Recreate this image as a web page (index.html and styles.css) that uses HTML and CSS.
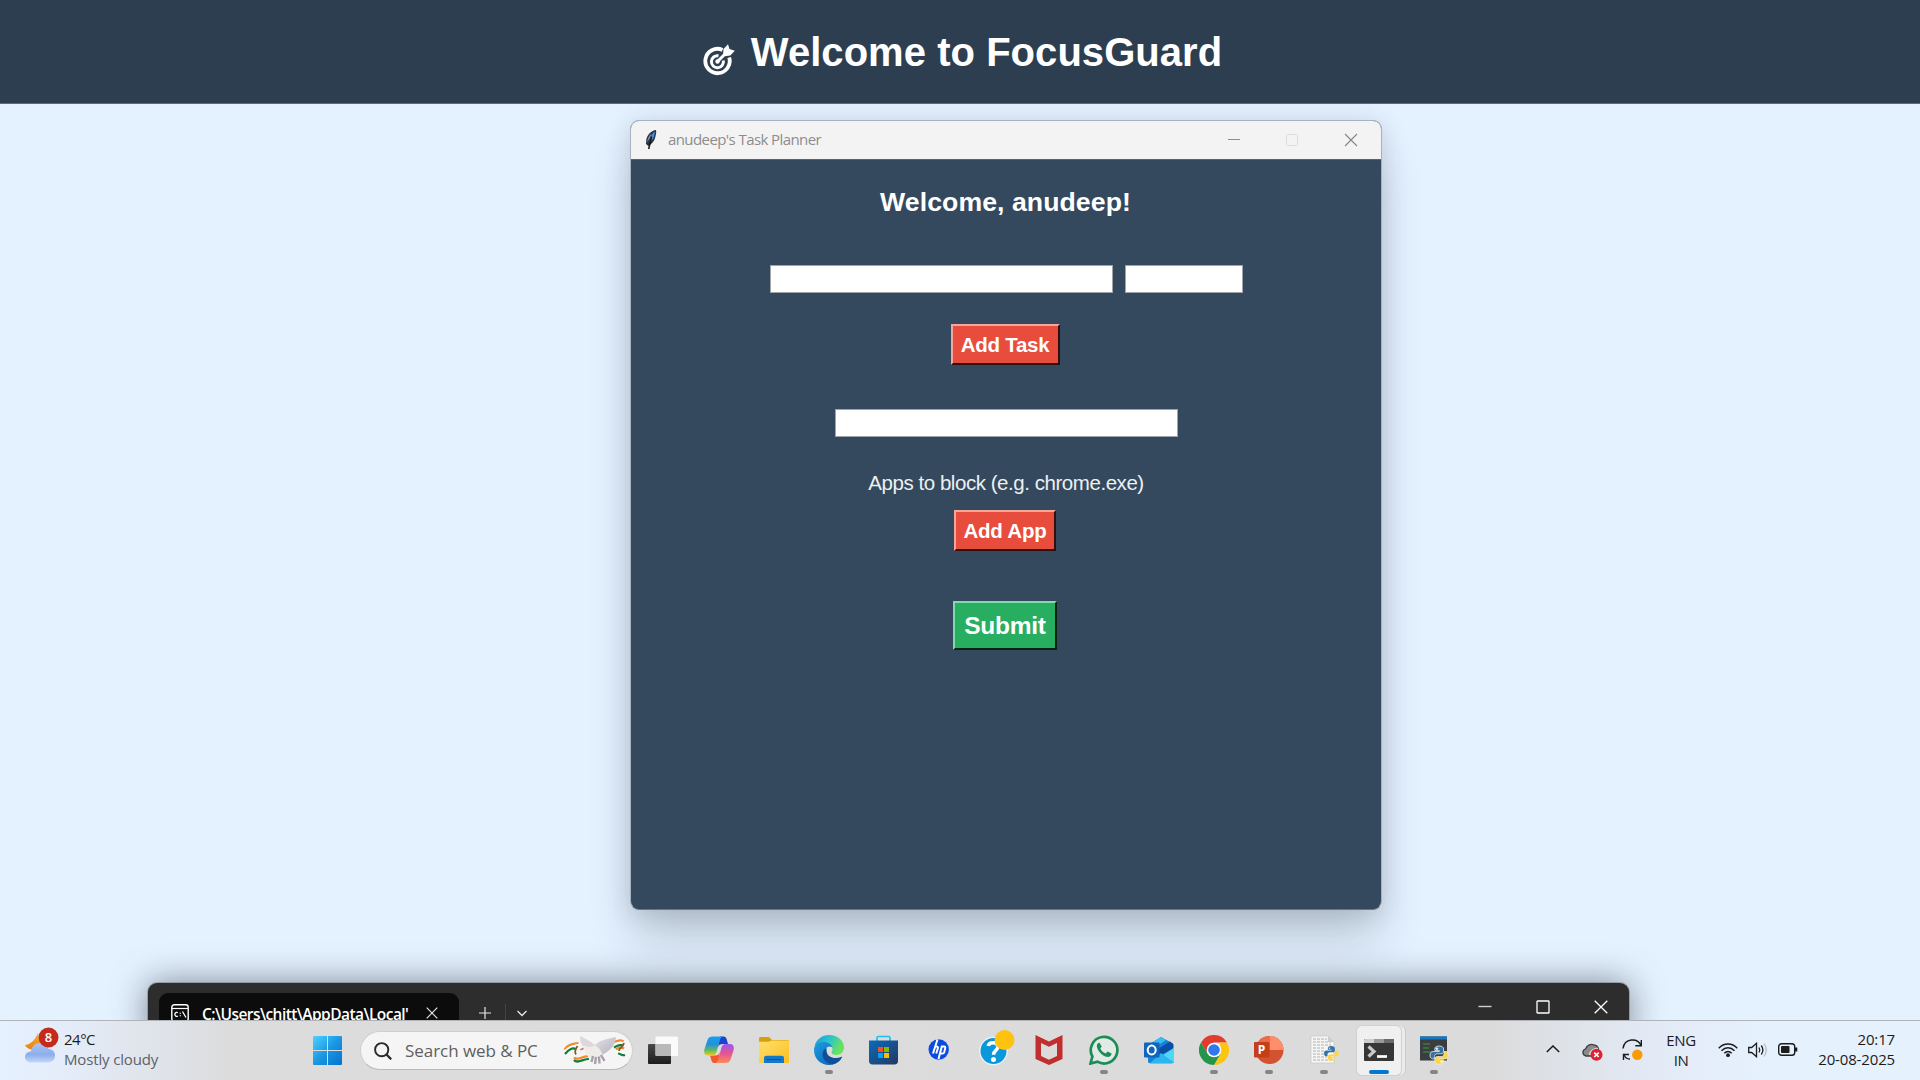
FILE: index.html
```html
<!DOCTYPE html>
<html lang="en">
<head>
<meta charset="utf-8">
<title>FocusGuard</title>
<link rel="stylesheet" href="styles.css">
</head>
<body>
<header class="banner">
  <svg class="banner-icon" viewBox="0 0 32 32" width="32" height="32" fill="none" stroke="#fff">
    <path d="M19.500 5.900A12.200 12.200 0 1 0 26.200 13.500" stroke-width="3.800"/>
    <path d="M15.500 11.800A6 6 0 1 0 20.300 16.500" stroke-width="3"/>
    <path d="M14.500 17.500L24 8" stroke-width="3"/>
    <path d="M20 11.500l.5-6.500L25 .3l1.500 4.700 5.300 1.700-4.500 4.800-5.500.8z" fill="#fff" stroke="none"/>
    <circle cx="14.500" cy="17.500" r="2.200" fill="#fff" stroke="none"/>
  </svg>
  <h1 class="banner-title">Welcome to FocusGuard</h1>
</header>

<main class="desktop">
  <section class="planner">
    <div class="planner-bar">
      <svg class="feather" viewBox="0 0 14 22" width="14" height="22">
        <path d="M12 1C7.500 1.500 3.300 5.500 2.300 10.500L2 15l2.300 2C8 15 10.500 12 11.200 8.500c.4-2.500 1.500-4.500.8-7.500z" fill="#2b3440"/>
        <path d="M11.200 2.500C8 4 6.300 7.500 5.500 13c3-2 4.300-4 4.700-6.500z" fill="#4a8be0"/>
        <path d="M7.500 4.500C5 7 3.700 9 3.300 13L6 9z" fill="#6d9bd0"/>
        <path d="M7.500 7.500L4.700 20" stroke="#151515" stroke-width="1.500"/>
      </svg>
      <span class="planner-title">anudeep's Task Planner</span>
      <div class="planner-controls">
        <svg viewBox="0 0 14 14" width="14" height="14"><path d="M1 6.500h12" stroke="#8c8c8c"/></svg>
        <svg viewBox="0 0 14 14" width="14" height="14"><rect x="1.500" y="1.500" width="11" height="11" rx="1" fill="none" stroke="#dcdcdc"/></svg>
        <svg viewBox="0 0 14 14" width="14" height="14"><path d="M1 1l12 12M13 1L1 13" stroke="#858585" stroke-width="1.100"/></svg>
      </div>
    </div>
    <div class="planner-body">
      <h2 class="greeting">Welcome, anudeep!</h2>
      <div class="entry-row">
        <div class="entry entry-wide"></div>
        <div class="entry entry-short"></div>
      </div>
      <button class="tk-button add-task">Add Task</button>
      <div class="entry entry-wide entry-app"></div>
      <p class="hint">Apps to block (e.g. chrome.exe)</p>
      <button class="tk-button add-app">Add App</button>
      <button class="tk-button submit">Submit</button>
    </div>
  </section>

  <section class="terminal">
    <div class="tab">
      <svg viewBox="0 0 18 18" width="18" height="18" fill="none" stroke="#fff">
        <rect x=".8" y=".8" width="16.400" height="16.400" rx="2.500" stroke-width="1.400"/>
        <path d="M1 4.500h16" stroke-width="1.200"/>
        <path d="M6.800 8.600a2 2 0 1 0 0 3.500M9.300 8.800v1M9.300 11.300v1M11.500 7.500l3.500 6" stroke-width="1.300"/>
      </svg>
      <span class="tab-title">C:\Users\chitt\AppData\Local'</span>
      <svg class="tab-close" viewBox="0 0 12 12" width="12" height="12"><path d="M.7.700l10.600 10.600M11.300.7L.7 11.300" stroke="#e4e4e4" stroke-width="1.200"/></svg>
    </div>
    <div class="tab-tools">
      <svg viewBox="0 0 12 12" width="12" height="12"><path d="M6 0v12M0 6h12" stroke="#e8e8e8" stroke-width="1.200"/></svg>
      <span class="tab-divider"></span>
      <svg viewBox="0 0 12 12" width="12" height="12"><path d="M1.500 4l4.500 4.500L10.500 4" fill="none" stroke="#e8e8e8" stroke-width="1.300"/></svg>
    </div>
    <div class="terminal-controls">
      <svg viewBox="0 0 14 14" width="14" height="14"><path d="M.5 6.500h13" stroke="#d0d0d0" stroke-width="1.400"/></svg>
      <svg viewBox="0 0 14 14" width="14" height="14"><rect x="1" y="1" width="12" height="12" rx=".6" fill="none" stroke="#fff" stroke-width="1.300"/></svg>
      <svg viewBox="0 0 14 14" width="14" height="14"><path d="M.7.700l12.600 12.600M13.300.7L.7 13.300" stroke="#fff" stroke-width="1.300"/></svg>
    </div>
  </section>
</main>

<footer class="taskbar">
  <svg width="0" height="0" class="defs">
    <defs>
      <linearGradient id="cloud" x2="0" y2="1"><stop stop-color="#a9c4f3"/><stop offset=".6" stop-color="#8eadea"/><stop offset="1" stop-color="#c4d8fa"/></linearGradient>
      <linearGradient id="moon" x2="0" y2="1"><stop stop-color="#f7b52b"/><stop offset="1" stop-color="#ee7d11"/></linearGradient>
      <linearGradient id="win" gradientUnits="userSpaceOnUse" x1="0" y1="0" x2="29" y2="29"><stop stop-color="#4fd2ff"/><stop offset=".5" stop-color="#1a97e2"/><stop offset="1" stop-color="#0671ce"/></linearGradient>
      <linearGradient id="dark" x2="0" y2="1"><stop stop-color="#4a4a48"/><stop offset="1" stop-color="#1d1d1d"/></linearGradient>
      <linearGradient id="copL" x2="0" y2="1"><stop stop-color="#16a0f0"/><stop offset=".4" stop-color="#2390dc"/><stop offset=".7" stop-color="#58b86c"/><stop offset="1" stop-color="#f2cb15"/></linearGradient>
      <linearGradient id="copR" x2="0" y2="1"><stop stop-color="#9b56f0"/><stop offset=".5" stop-color="#e65591"/><stop offset="1" stop-color="#fc8a55"/></linearGradient>
      <linearGradient id="folder" x2="1" y2="1"><stop stop-color="#ffdf6d"/><stop offset="1" stop-color="#fdbf20"/></linearGradient>
      <linearGradient id="edgeTop" x2="1" y2=".4"><stop stop-color="#1b97dd"/><stop offset=".5" stop-color="#2cc2cf"/><stop offset="1" stop-color="#6ae35a"/></linearGradient>
      <linearGradient id="edgeLow" x2="1" y2="1"><stop stop-color="#1b9de2"/><stop offset="1" stop-color="#0d5cb0"/></linearGradient>
      <linearGradient id="store" x2="1" y2="1"><stop stop-color="#0b6bbb"/><stop offset="1" stop-color="#24365f"/></linearGradient>
      <linearGradient id="wing" x2="1" y2="1"><stop stop-color="#e6e2e6"/><stop offset="1" stop-color="#b3b0bf"/></linearGradient>
      <g id="python">
        <path d="M7.800 0C5 0 4.200 1.200 4.200 2.600V4h4v.8H2.600C1 4.800 0 6 0 8s1 3.200 2.300 3.200h1.500V9.300c0-1.500 1.100-2.500 2.500-2.500h3.500c1.200 0 2-.9 2-2V2.600C11.800 1 10.500 0 7.800 0z" fill="#3573a6"/>
        <path d="M8.200 16c2.800 0 3.600-1.200 3.600-2.600V12h-4v-.8h5.600C15 11.200 16 10 16 8s-1-3.200-2.300-3.200h-1.500v1.900c0 1.500-1.100 2.500-2.500 2.500H6.200c-1.200 0-2 .9-2 2v2.200C4.200 15 5.500 16 8.200 16z" fill="#ffd545"/>
        <circle cx="6" cy="2.300" r=".8" fill="#fff"/><circle cx="10" cy="13.700" r=".8" fill="#fff"/>
      </g>
    </defs>
  </svg>

  <div class="weather">
    <svg viewBox="0 0 36 38" width="36" height="38">
      <path d="M14 6c-3 6-6 11-13 12 2 4 6 5 10 4.500l7-5-3-5z" fill="url(#moon)"/>
      <path d="M8 35.500c-4 0-7-2-7-5.500 0-3.300 2.700-5.500 6-5.500.6-5.500 4-8.500 9-8.500 4.500 0 7.500 2.300 8.500 6 3.700 0 6.500 2.500 6.500 6.500s-2.800 7-7 7z" fill="url(#cloud)"/>
      <circle cx="24.500" cy="10.500" r="10" fill="#c42b1c"/>
      <text x="24.500" y="15.200" class="badge-number">8</text>
    </svg>
    <div class="weather-text">
      <span class="temperature">24°C</span>
      <span class="condition">Mostly cloudy</span>
    </div>
  </div>

  <svg class="start" viewBox="0 0 29 29" width="29" height="29" fill="url(#win)">
    <path d="M1 0h13v14H0V1a1 1 0 0 1 1-1zM15 0h13a1 1 0 0 1 1 1v13H15zM0 15h14v14H1a1 1 0 0 1-1-1zM15 15h14v13a1 1 0 0 1-1 1H15z"/>
  </svg>

  <div class="search">
    <svg viewBox="0 0 18 18" width="18" height="18" fill="none" stroke="#2a2a2a"><circle cx="7.700" cy="7.700" r="6.600" stroke-width="1.900"/><path d="M12.500 12.500l4.700 4.800" stroke-width="2.300"/></svg>
    <span class="search-text">Search web &amp; PC</span>
    <svg class="dove" viewBox="0 0 63 32" width="63" height="32" fill="none">
      <path d="M.5 14.500C4 9 9 9 14.500 8M48 8c4-2.500 10-3.500 11.500-1.500M52 14.500c2-2 6-2.500 8-1M10 22.500c3 4 9-2 14-1" stroke="#f28a2a" stroke-width="2.200"/>
      <path d="M.5 17C4 11.500 9 11.500 15 9.500c-3 3.500-6 6-5 10M49 10.500c4-2.500 8-3.500 10-2.500M53 16.500c2 0 5 1 7 2.500" stroke="#fdfdfd" stroke-width="1.800"/>
      <path d="M1 19c4-5 8-7 11-4.500M10 25c3 4 9-1 15-1M50 12.500c4-2.500 8-3 9-2M54 18.500c2.500 0 4.500 2.500 7 1.500" stroke="#12803a" stroke-width="2.200"/>
      <path d="M13.500 11c-2 3-3.500 6-1.500 8.500M60 8c-1 4-5 5-5 8" stroke="#7b5b2c" stroke-width="1.800"/>
      <path d="M16.500.5C15.800 6 17 9.500 20 11.500c4 1.500 8 1.500 12 0C28 6 21 4.500 16.500.5z" fill="#dcd8dc"/>
      <path d="M52 2C43 4 34 5 29.500 12l1 7 7.500 1 5-3 4-3.500c3-3 4.500-7 5-11.500z" fill="url(#wing)"/>
      <path d="M16.500 14.500l2.500-3c2-1.200 4.300-.5 5.500 1l7-2c4 3 7 6.500 6.500 9.500l-5 3.500c-6 .5-11.500-2-12.500-9l-1.500-.5z" fill="#efebe7"/>
      <path d="M29 21l-1.500 6M32 22l-1 7M35 21.500l.5 7M37 20l3.500 6" stroke="#a5a0ac" stroke-width="2.400"/>
      <path d="M16.500 14.700l3-1.200" stroke="#e0683f" stroke-width="1.500"/>
    </svg>
  </div>

  <nav class="apps">
    <div class="app">
      <svg viewBox="0 0 30 30" width="30" height="30"><rect y="9" width="23" height="20" rx="1" fill="url(#dark)"/><rect x="7.500" y="1.500" width="22.500" height="19.500" rx="1" fill="#fff" opacity=".86"/><path d="M7.500 9H23v12H8.500a1 1 0 0 1-1-1z" fill="#b9b9b9"/></svg>
    </div>
    <div class="app">
      <svg viewBox="0 0 30 30" width="30" height="30">
        <path d="M16 1.500h3.500c2 0 2.700 1.300 3.200 3L24 9h-5c-3 0-4 1-5 3z" fill="#1b43cf"/>
        <path d="M14 28h-3.500c-2 0-2.700-1.300-3.200-3L6 20.500h5c3 0 4-1 5-4z" fill="#f6582e"/>
        <path d="M9 1.500h9.500c-2 1-2.500 3-3.200 5.500L12.500 17c-.8 2.500-2 3.500-4.500 3.500H4c-3.500 0-4.500-3-3.500-6.500L3.500 5C4.300 2.500 6 1.500 9 1.500z" fill="url(#copL)"/>
        <path d="M21 28h-9.500c2-1 2.500-3 3.200-5.500l2.800-10c.8-2.500 2-3.500 4.500-3.500h4c3.500 0 4.500 3 3.500 6.500l-3 9c-.8 2.500-2.500 3.500-5.500 3.500z" fill="url(#copR)"/>
      </svg>
    </div>
    <div class="app">
      <svg viewBox="0 0 30 30" width="30" height="30"><path d="M0 3.500C0 2.700.7 2 1.500 2H9c1 0 1.500.3 2 1l2 2h15.500c.8 0 1.500.700 1.500 1.500V12H0z" fill="#db9d08"/><path d="M0 6.700h9.500c1 0 2-1 3-1.200H29a1 1 0 0 1 1 1V27a1 1 0 0 1-1 1H1a1 1 0 0 1-1-1z" fill="url(#folder)"/><path d="M5 28v-5c0-1.500 1-2.300 2.500-2.300h15c1.500 0 2.500.8 2.500 2.300v5z" fill="#1478ca"/><path d="M8.500 24.500h13" stroke="#09519a" stroke-width="1.200" stroke-linecap="round"/></svg>
    </div>
    <div class="app">
      <svg viewBox="0 0 30 30" width="30" height="30">
        <path d="M.5 11.500C2 4.500 8 0 15 0c9 0 15 6 15 12.500 0 4.500-3.500 7.500-7.500 7.500-3 0-5-1.300-5-2.500s1-1.300 1-3.500c0-3-4-6-9-6-4.500 0-7.500 1.700-9 3.500z" fill="url(#edgeTop)"/>
        <path d="M0 15C0 10 4 7 9.500 7c4.500 0 8.500 2.500 9 5.500-1.300-1.200-3.500-1.500-5-.5-3 2-3 7-.5 10 3 3.500 7 4.500 14 2C24 28 20 30 15 30 6.500 30 0 23.500 0 15z" fill="url(#edgeLow)"/>
        <path d="M12.500 13C8 15 7.500 21 10.500 25c2.500 3.300 6 4.500 9 4 3.500-1 6.500-3.500 8.500-6.500.300-.7 0-1-1-.5-5.500 2.500-12.500.5-14-4-.6-2-.5-4-.5-5z" fill="#0e4f98"/>
      </svg>
      <span class="running"></span>
    </div>
    <div class="app">
      <svg viewBox="0 0 30 30" width="30" height="30"><path d="M8 6V3c0-1 .7-1.500 1.500-1.500h10c.8 0 1.500.5 1.500 1.500v3" fill="none" stroke="#1ec0f3" stroke-width="1.700"/><path d="M0 5.500h29V26c0 2.200-1.300 3.500-3.500 3.500h-22C1.300 29.500 0 28.200 0 26z" fill="url(#store)"/><path d="M9 12h5v5H9z" fill="#f25022"/><path d="M15 12h5v5h-5z" fill="#7fba00"/><path d="M9 18h5v5H9z" fill="#00a4ef"/><path d="M15 18h5v5h-5z" fill="#ffb900"/></svg>
    </div>
    <div class="app">
      <svg viewBox="0 0 30 30" width="30" height="30"><circle cx="14.700" cy="14.500" r="10.200" fill="#0a4be0"/><path d="M13.500 4.500L9 18.500M10.500 11.500h2q2 0 1.300 2L12.200 18.500M20.500 11.500h-2.700L14.500 24M16 18.500h2.500q1.300 0 1.700-1.300l1-4q.4-1.700-1.200-1.700" fill="none" stroke="#fff" stroke-width="2"/></svg>
    </div>
    <div class="app">
      <svg class="help" viewBox="0 0 36 38" width="36" height="38"><circle cx="14.500" cy="22" r="14.300" fill="#eaf6fc"/><circle cx="14.500" cy="22" r="13" fill="#0a98da"/><path d="M9.300 17c.5-4.200 9.200-4.500 9.700.5.300 3.500-4.500 4-4.500 8.200" fill="none" stroke="#fff" stroke-width="3.600"/><circle cx="14.500" cy="30.500" r="2.500" fill="#fff"/><circle cx="25.500" cy="11" r="10" fill="#ffc20e"/></svg>
    </div>
    <div class="app">
      <svg viewBox="0 0 30 30" width="30" height="30"><path fill-rule="evenodd" d="M1.500 0L15 6.500 28.500 0v24L15 30 1.500 24zM7 8v13l8 3.800 8-3.800V8l-8 3.800z" fill="#c22e2e"/></svg>
    </div>
    <div class="app">
      <svg viewBox="0 0 30 30" width="30" height="30"><path d="M1.500 28.500l1.900-7A13.300 13.300 0 1 1 8.500 26.700z" fill="#e2eae5" stroke="#1c8d56" stroke-width="2.700"/><path d="M10.300 7.500c-2.500 1-3 3.300-2 5.700 2 4.600 5.700 7.700 9.300 8.600 2.700.6 4.700-.8 5-3.300l-4-2-2 2c-2.500-1-4.300-2.800-5.300-5l1.500-2z" fill="#1c8d56"/></svg>
      <span class="running"></span>
    </div>
    <div class="app">
      <svg viewBox="0 0 30 30" width="30" height="30"><path d="M4 10L17 2l12 6.500V26c0 1.500-.7 2.300-2.300 2.300H6c-1.300 0-2-1-2-2.300z" fill="#1683d8"/><path d="M10 6.500L17 2l5 3-12 8z" fill="#38bdf2"/><path d="M13 14.500L26 6.500l3.500 3V13L15 21z" fill="#0b4da2"/><path d="M30 12v14c0 1.500-1 2.300-2.500 2.300H6L30 13z" fill="#50d7f7"/><path d="M17 18l13 9.500c-.5.600-1.300.8-2.500.8H6z" fill="#2bb7ed"/><rect y="7.500" width="15.500" height="15" rx="1" fill="#1066bd"/><ellipse cx="7.700" cy="15" rx="4" ry="4.500" fill="none" stroke="#fff" stroke-width="2"/></svg>
    </div>
    <div class="app">
      <svg viewBox="0 0 30 30" width="30" height="30"><path d="M2 7.500A15 15 0 0 1 28 7.500H15l-6.500 11z" fill="#e33b2e"/><path d="M28 7.500A15 15 0 0 1 15 30l6.500-11.300L21 7.500z" fill="#fdc413"/><path d="M2 7.500A15 15 0 0 0 15 30l6.500-11.300L15 21.500l-6.500-3z" fill="#239649"/><circle cx="15" cy="15" r="7.300" fill="#fff"/><circle cx="15" cy="15" r="5.800" fill="#3079ed"/></svg>
      <span class="running"></span>
    </div>
    <div class="app">
      <svg viewBox="0 0 30 30" width="30" height="30"><circle cx="15.500" cy="15" r="14" fill="#d35230"/><path d="M15.500 1a14 14 0 0 1 14 14h-14z" fill="#ff8f6b"/><path d="M15.500 1A14 14 0 0 0 1.500 15h14z" fill="#ed6c47"/><rect y="7" width="15.500" height="15.500" rx="1" fill="#c43e1c"/><text x="7.500" y="19" class="ppt-letter">P</text></svg>
      <span class="running"></span>
    </div>
    <div class="app">
      <svg viewBox="0 0 30 30" width="30" height="30"><path d="M2 1h17l6 6v21H2z" fill="#f5f5f4" stroke="#c8c8c8" stroke-width=".7"/><path d="M4 4h14M4 7h18M4 10h18M4 13h12M4 16h12M4 19h12M4 22h14M4 25h18" stroke="#b0b0b0" stroke-dasharray="3 1"/><path d="M19 1v6h6z" fill="#ccc"/><use href="#python" transform="translate(15 11) scale(.92)"/></svg>
      <span class="running"></span>
    </div>
    <div class="app app-active">
      <svg viewBox="0 0 30 30" width="30" height="30"><path d="M0 4h30v21a1 1 0 0 1-1 1H1a1 1 0 0 1-1-1z" fill="#363636"/><path d="M1 4h9v4H0V5a1 1 0 0 1 1-1z" fill="#cfcfcf"/><path d="M10 4h10v4H10z" fill="#999"/><path d="M20 4h10v4H20z" fill="#6a6a6a"/><path d="M4.500 11.500l5.500 5-5.500 5" fill="none" stroke="#c9c9c9" stroke-width="3.200"/><path d="M13 21.500h10" stroke="#fff" stroke-width="2.700"/></svg>
      <span class="running"></span>
    </div>
    <div class="app">
      <svg viewBox="0 0 30 30" width="30" height="30"><rect x="1" y="1.500" width="27" height="24" fill="#3a3e40"/><rect x="1" y="1.500" width="27" height="3" fill="#0f78c8"/><path d="M4 9h7M4 13h6M4 17h9" stroke="#3d7c40" stroke-width="1.400"/><use href="#python" transform="translate(11 11) scale(1.150)" stroke="#e9edf0" stroke-width=".7"/></svg>
      <span class="running"></span>
    </div>
  </nav>

  <div class="tray">
    <svg class="tray-chevron" viewBox="0 0 14 8" width="14" height="8"><path d="M.8 7L7 1l6.200 6" fill="none" stroke="#1c1c1c" stroke-width="1.500"/></svg>
    <svg class="tray-cloud" viewBox="0 0 21 18" width="21" height="18"><path d="M4 13c-4-1-4-6-.5-7C5 2 9 .5 12 2c3 .2 4 2 4.500 4L9 13z" fill="#8b8b8b" stroke="#3f3f3f" stroke-width="1.300"/><path d="M8 12c1-4 3-6 8-6" stroke="#ddd" stroke-width="2.500" fill="none"/><circle cx="14.500" cy="11.800" r="6" fill="#dc2332"/><path d="M12.300 9.600l4.400 4.400M16.700 9.600l-4.400 4.400" stroke="#fff" stroke-width="1.700"/></svg>
    <svg class="tray-sync" viewBox="0 0 21 22" width="21" height="22" fill="none" stroke="#1c1c1c" stroke-width="1.400"><path d="M1 9.500C2.500-1 15.500-1.500 19 6.500M19.300 1v5.800h-6M8 20c-3 0-5.500-2-6-5M1.500 21v-5.500H7"/><circle cx="15.300" cy="15.800" r="5.200" fill="#fb9a05" stroke="none"/></svg>
    <div class="language"><span>ENG</span><span>IN</span></div>
    <svg class="tray-wifi" viewBox="0 0 20 16" width="20" height="16" fill="none" stroke="#1c1c1c" stroke-width="1.400"><path d="M.7 6.200c5.300-5.600 13.300-5.600 18.600 0M3.500 8.800c3.800-4 9.200-4 13 0M6.300 11.300c2.200-2.400 5.200-2.400 7.400 0"/><circle cx="10" cy="13.200" r="1.900" fill="#1c1c1c" stroke="none"/></svg>
    <svg class="tray-sound" viewBox="0 0 20 16" width="20" height="16" fill="none" stroke="#1c1c1c" stroke-width="1.300"><path d="M.7 5.500h3L8.500 1.300v13.400L3.700 10.500h-3z"/><path d="M11 5.500q1.600 2.500 0 5M13.300 3.500q3.200 4.500 0 9"/><path d="M16 1.500q4.500 6.500 0 13" stroke="#b6bcc4"/></svg>
    <svg class="tray-battery" viewBox="0 0 20 13" width="20" height="13"><rect x=".7" y=".7" width="16" height="11.600" rx="2.800" fill="none" stroke="#1c1c1c" stroke-width="1.400"/><rect x="3" y="3" width="8.500" height="7" rx="1" fill="#1c1c1c"/><path d="M18 4.500v4" stroke="#1c1c1c" stroke-width="2.600"/></svg>
    <div class="clock"><span>20:17</span><span>20-08-2025</span></div>
  </div>
</footer>
</body>
</html>
```

FILE: styles.css
```css
* { box-sizing: border-box; }

body {
  margin: 0;
  width: 1920px;
  height: 1080px;
  display: flex;
  flex-direction: column;
  overflow: hidden;
  background: #e4f1ff;
  font-family: "Liberation Sans", Arial, sans-serif;
}

svg { display: block; flex: none; }
.defs { position: absolute; }

/* Banner */
.banner {
  height: 104px;
  flex: none;
  display: flex;
  justify-content: center;
  padding-left: 5px;
  background: #2c3e50;
  border-bottom: 1px solid #5b6a7d;
  color: #fff;
}
.banner-icon { margin-top: 44px; }
.banner-title {
  margin: 29px 0 0 16px;
  font-size: 40px;
  line-height: 46px;
  letter-spacing: .04px;
}

/* Windows */
.desktop {
  position: relative;
  flex: 1;
  overflow: hidden;
}
.planner {
  position: absolute;
  left: 630px;
  top: 16px;
  width: 752px;
  height: 790px;
  display: flex;
  flex-direction: column;
  overflow: hidden;
  background: #34495e;
  border: 1px solid #a5b2bf;
  border-bottom-color: #677789;
  border-radius: 9px;
  box-shadow: 0 34px 46px -4px rgba(40, 50, 60, .2), 0 3px 24px rgba(40, 50, 60, .17);
}
.planner-bar {
  height: 38px;
  flex: none;
  display: flex;
  align-items: center;
  padding-left: 13px;
  background: #f3f3f3;
}
.planner-title {
  margin: -2px 0 0 10px;
  font: 15px/20px "Open Sans", "Noto Sans", sans-serif;
  letter-spacing: -.58px;
  color: #8d8d8d;
}
.planner-controls {
  display: flex;
  gap: 44.500px;
  margin-left: auto;
  padding-right: 23.500px;
}
.planner-body {
  flex: 1;
  display: flex;
  flex-direction: column;
  align-items: center;
  color: #fff;
  border-top: 1px solid #50647a;
}
.greeting {
  margin: 26px 1px 0 0;
  font-size: 26.670px;
  line-height: 32px;
  letter-spacing: .06px;
}
.entry-row {
  display: flex;
  gap: 12px;
  margin-top: 47px;
}
.entry {
  height: 28px;
  background: #fff;
  border: 1px solid #a0a4a8;
}
.entry-wide { width: 343px; }
.entry-short { width: 118px; }
.tk-button {
  margin-right: 2px;
  padding: 0;
  border: 2px solid;
  color: #fff;
  font: bold 20.500px/24px "Liberation Sans", Arial, sans-serif;
  letter-spacing: -.25px;
  background: #e74c3c;
  border-color: #f5a59c #30100d #30100d #f5a59c;
}
.add-task { width: 109px; height: 41px; margin-top: 31px; }
.entry-app { margin-top: 44px; }
.hint {
  margin: 34px 0 0;
  font-size: 20.500px;
  line-height: 24px;
  letter-spacing: -.45px;
  color: #ecf0f1;
}
.add-app { width: 102px; height: 41px; margin-top: 15px; }
.submit {
  width: 104px;
  height: 49px;
  margin-top: 50px;
  font-size: 24.500px;
  background: #27ae60;
  border-color: #7fdca5 #08240f #08240f #7fdca5;
}

.terminal {
  position: absolute;
  left: 148px;
  top: 879px;
  width: 1481px;
  height: 60px;
  display: flex;
  align-items: flex-start;
  padding: 10px 21px 0 11px;
  background: #2d2d2d;
  border-radius: 9px 9px 0 0;
  box-shadow: 0 0 0 1px rgba(110, 120, 130, .5), 0 0 34px rgba(20, 25, 30, .5);
}
.tab {
  width: 300px;
  height: 50px;
  display: flex;
  align-items: flex-start;
  padding: 11px 21px 0 12px;
  background: #0c0c0c;
  border-radius: 9px 9px 0 0;
}
.tab-title {
  width: 212px;
  margin: -2px 0 0 13px;
  white-space: nowrap;
  font: 600 15.500px/24px "Open Sans", "Noto Sans", sans-serif;
  letter-spacing: -.55px;
  color: #fff;
}
.tab-close { margin: 3px 0 0 auto; }
.tab-tools {
  display: flex;
  align-items: center;
  margin: 11px 0 0 20px;
}
.tab-divider {
  width: 1px;
  height: 18px;
  margin: 0 10px 0 14px;
  background: #444;
}
.terminal-controls {
  display: flex;
  gap: 44px;
  margin: 7px 0 0 auto;
}

/* Taskbar */
.taskbar {
  height: 60px;
  flex: none;
  display: flex;
  align-items: flex-start;
  border-top: 1px solid #b0b3b7;
  background: linear-gradient(90deg, #e6f1ff 0, #e3ebf7 80px, #dcdcdc 230px, #dbdbdb 1490px, #e2e9f4 1640px, #e6f1fe 1760px);
  font-family: "Open Sans", "Noto Sans", sans-serif;
  color: #1c1c1c;
}
.weather {
  width: 288px;
  display: flex;
  padding: 6px 0 0 24px;
}
.badge-number { font: 600 13px "Open Sans", sans-serif; text-anchor: middle; fill: #fff; }
.weather-text {
  display: flex;
  flex-direction: column;
  margin: 2px 0 0 4px;
  font-size: 15px;
  line-height: 20px;
  letter-spacing: -.15px;
}
.temperature { letter-spacing: -.5px; }
.condition { color: #5d6168; }
.start { margin: 15px 18px 0 25px; }
.search {
  width: 273px;
  height: 39px;
  display: flex;
  align-items: center;
  margin-top: 10px;
  padding: 0 5px 0 13px;
  background: #f5f5f5;
  border: 1px solid #cfcfcf;
  border-bottom-color: #b9b9b9;
  border-radius: 20px;
}
.search-text {
  margin-left: 13px;
  font-size: 17px;
  letter-spacing: -.05px;
  color: #5f5f5f;
  white-space: nowrap;
}
.dove { margin-left: auto; }
.apps { display: flex; margin-left: 3px; }
.app {
  width: 55px;
  height: 59px;
  display: flex;
  flex-direction: column;
  align-items: center;
  padding-top: 14px;
}
.app:first-child { padding-right: 2px; }
.help { margin: -6px 0 -2px 6px; }
.running {
  width: 8px;
  height: 4px;
  margin-top: 5px;
  border-radius: 2px;
  background: #858585;
}
.ppt-letter { font: bold 12px "Open Sans", sans-serif; text-anchor: middle; fill: #fff; }
.app-active {
  width: 44px;
  height: 49px;
  margin: 5px 5px 0 6px;
  padding-top: 9px;
  background: #f0f0f0;
  border-radius: 5px;
  box-shadow: 0 0 0 1px #d0d0d0, 4px 0 0 #ebebeb, 5px 0 0 #cacaca;
}
.app-active .running { width: 20px; background: #0078d4; }
.tray {
  display: flex;
  align-items: flex-start;
  margin-left: auto;
  padding-right: 25px;
}
.tray-chevron { margin-top: 24px; }
.tray-cloud { margin: 22px 0 0 22px; }
.tray-sync { margin: 18px 0 0 19px; }
.language, .clock {
  display: flex;
  flex-direction: column;
  font-size: 15px;
  line-height: 20px;
  letter-spacing: -.4px;
  white-space: nowrap;
}
.language { width: 30px; margin: 9px 0 0 23px; align-items: center; }
.tray-wifi { margin: 21px 0 0 22px; }
.tray-sound { margin: 21px 0 0 10px; }
.tray-battery { margin: 22px 0 0 10px; }
.clock { width: 77px; margin: 8px 0 0 20px; align-items: flex-end; letter-spacing: -.15px; }
```
